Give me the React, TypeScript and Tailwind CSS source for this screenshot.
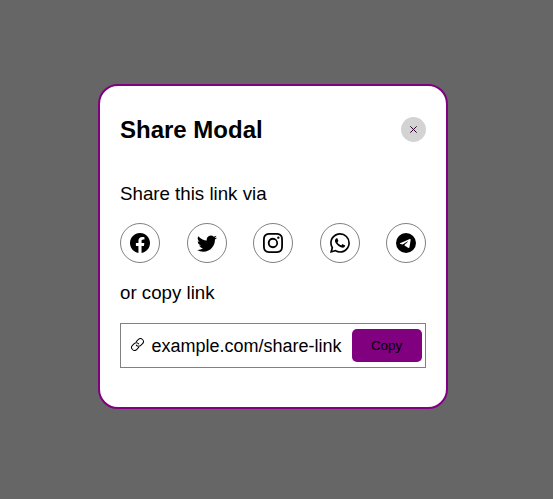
import { BsFacebook, BsTwitter, BsInstagram, BsWhatsapp, BsTelegram } from "react-icons/bs";

const networks = [
  { name: "Facebook", Icon: BsFacebook },
  { name: "Twitter", Icon: BsTwitter },
  { name: "Instagram", Icon: BsInstagram },
  { name: "WhatsApp", Icon: BsWhatsapp },
  { name: "Telegram", Icon: BsTelegram },
];

function CloseIcon() {
  return (
    <svg width="7" height="7" viewBox="0 0 7 7" fill="none" stroke="#300030" strokeWidth="1">
      <path d="M.3.3l6.4 6.4M6.7.3L.3 6.7" />
    </svg>
  );
}

function ChainIcon() {
  return (
    <svg width="13" height="13" viewBox="1 1 22 22" fill="none" stroke="currentColor" strokeWidth="1.7" strokeLinecap="round">
      <path d="M10 13a5 5 0 0 0 7.54.54l3-3a5 5 0 0 0-7.07-7.07l-3.5 3.5" />
      <path d="M14 11a5 5 0 0 0-7.54-.54l-3 3a5 5 0 0 0 7.07 7.07l3.500-3.500" />
    </svg>
  );
}

export default function App() {
  return (
    <div className="flex h-[499px] w-full justify-center overflow-hidden bg-[#666666] pt-[84px] pr-[7px] font-['Liberation_Sans',Arial,sans-serif] text-black">
      <div className="h-[325px] w-[350px] rounded-[20px] border-2 border-[#800080] bg-white px-5">
        <header className="flex h-[87px] items-center justify-between">
          <h1 className="text-2xl font-bold">Share Modal</h1>
          <button aria-label="Close" className="flex size-[25px] items-center justify-center rounded-full bg-[#d3d3d3]">
            <CloseIcon />
          </button>
        </header>
        <p className="mt-[10px] text-[18.72px] leading-[21px]">Share this link via</p>
        <div className="mt-[19px] flex justify-between">
          {networks.map(({ name, Icon }) => (
            <button key={name} aria-label={name} className="flex size-10 items-center justify-center rounded-full border border-[#808080]">
              <Icon size={20} />
            </button>
          ))}
        </div>
        <p className="mt-[19px] text-[18.72px] leading-[21px]">or copy link</p>
        <div className="mt-5 flex h-[45px] items-center border border-[#808080] pr-[3px] pl-[10px]">
          <span className="mb-0.5"><ChainIcon /></span>
          <span className="ml-[7.5px] flex-1 text-lg">example.com/share-link</span>
          <button className="h-[33px] w-[70px] rounded-[5px] bg-[#800080] pr-px text-[13.333px]">Copy</button>
        </div>
      </div>
    </div>
  );
}
